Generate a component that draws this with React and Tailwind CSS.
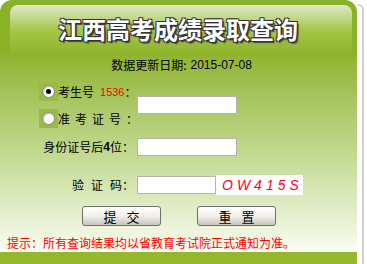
import React from 'react';

const cjk = { fontFamily: '"Noto Sans CJK SC", "Liberation Sans", sans-serif' };

function Radio({ checked }) {
  return (
    <span className="w-[19px] h-[19px] bg-[#9aba42] flex items-center justify-center shrink-0">
      <span className="w-[13px] h-[13px] rounded-full bg-white border border-[#8a8a8a] flex items-center justify-center shadow-[inset_1px_1px_1px_rgba(0,0,0,0.25)]">
        {checked && <span className="w-[5px] h-[5px] rounded-full bg-black" />}
      </span>
    </span>
  );
}

function Field({ w = 'w-[100px]' }) {
  return <div className={`${w} h-[18px] bg-white border border-[#b4b4b4]`} />;
}

function Btn({ children }) {
  return (
    <div className="w-[79px] h-[20px] rounded-[3px] border border-[#6f6f6f] bg-gradient-to-b from-[#ffffff] via-[#f0efea] to-[#c9c6bb] flex items-center justify-center text-[13px] text-black tracking-[10px] pl-[10px] leading-none">
      {children}
    </div>
  );
}

export default function App() {
  return (
    <div className="w-[367px] h-[264px] flex bg-white overflow-hidden text-black" style={cjk}>
      <div className="w-[357px] flex flex-col shrink-0">
        {/* header */}
        <div className="h-[55px] bg-[#8ab229] rounded-t-[12px] pt-[5px] pl-[10px] pr-[5px] shrink-0">
          <div className="h-full rounded-t-[8px] bg-gradient-to-b from-[#dfe8c6] via-[#a6c646] to-[#8cb32a] flex items-center justify-center pb-[2px] pr-[6px]">
            <div className="text-[24px] font-bold text-white leading-none [text-shadow:1px_1px_0_#333,-1px_-1px_0_#333,1px_-1px_0_#333,-1px_1px_0_#333,2px_2px_1px_#444]">
              江西高考成绩录取查询
            </div>
          </div>
        </div>

        {/* body */}
        <div className="flex-1 flex flex-col bg-gradient-to-b from-[#91b42d] via-[#c2d98f] to-[#fafcf2] text-[12px] leading-[14px] whitespace-nowrap">
          <div className="mt-[3px] h-[14px] flex justify-center pl-[6px]">
            <span>数据更新日期:</span>
            <span className="ml-[4px]" style={{ fontFamily: '"Liberation Sans", sans-serif' }}>2015-07-08</span>
          </div>

          {/* radio block */}
          <div className="mt-[10px] flex items-center">
            <div className="w-[134px] shrink-0 pl-[39px] flex flex-col gap-[8px]">
              <div className="h-[19px] flex items-center">
                <Radio checked />
                <span className="shrink-0">考生号</span>
                <span className="ml-[6px] shrink-0 text-[11px] text-[#ff0000]" style={{ fontFamily: '"Liberation Sans", sans-serif' }}>1536</span>
                <span className="shrink-0">：</span>
              </div>
              <div className="h-[19px] flex items-center">
                <Radio />
                <span className="shrink-0 tracking-[5px]">准考证号</span>
                <span className="shrink-0">：</span>
              </div>
            </div>
            <div className="ml-[3px]"><Field /></div>
          </div>

          {/* id row */}
          <div className="mt-[10px] flex items-center h-[18px]">
            <div className="w-[134px] shrink-0 flex justify-end items-center">
              <span>身份证号后</span>
              <b className="font-bold" style={{ fontFamily: '"Liberation Sans", sans-serif' }}>4</b>
              <span>位：</span>
            </div>
            <div className="ml-[3px]"><Field /></div>
          </div>

          {/* verify row */}
          <div className="mt-[19px] flex items-center h-[20px]">
            <div className="w-[134px] shrink-0 flex justify-end items-center">
              <span className="flex gap-[7px]"><span>验</span><span>证</span><span>码</span></span>
              <span>：</span>
            </div>
            <div className="ml-[3px]"><Field w="w-[79px]" /></div>
            <div className="w-[87px] h-[20px] bg-white flex items-center pl-[6px] text-[14px] italic text-[#ff0022] tracking-[4px]" style={{ fontFamily: '"Liberation Sans", sans-serif' }}>
              OW415S
            </div>
          </div>

          {/* buttons */}
          <div className="mt-[11px] flex pl-[82px] gap-[36px]">
            <Btn>提交</Btn>
            <Btn>重置</Btn>
          </div>

          {/* note */}
          <div className="mt-[10px] pl-[7px] text-[#ff0000]">
            提示：所有查询结果均以省教育考试院正式通知为准。
          </div>
        </div>

        <div className="h-[12px] bg-[#95b72d] shrink-0" />
      </div>

      {/* right edge */}
      <div className="w-[10px] flex pt-[4px]">
        <div className="ml-[1px] w-[6px] border-t-2 border-r-2 border-[#cfcfcf] rounded-tr-[6px]" />
      </div>
    </div>
  );
}
